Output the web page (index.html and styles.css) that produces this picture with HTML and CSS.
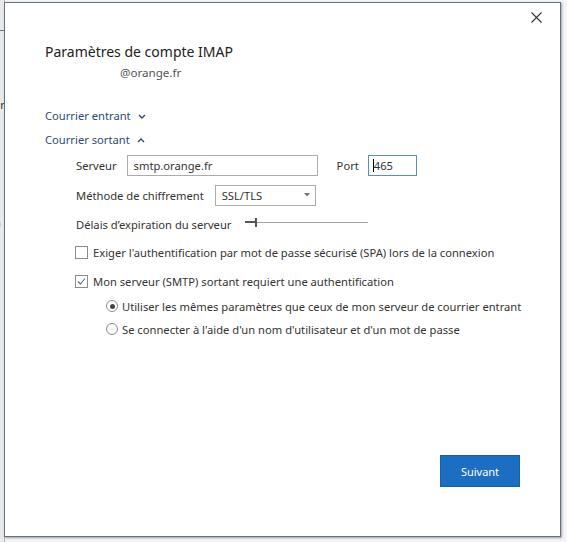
FILE: index.html
```html
<!DOCTYPE html>
<html lang="fr">
<head>
<meta charset="utf-8">
<link rel="stylesheet" href="styles.css">
</head>
<body>
<div class="behind">
  <span class="frag frag1">er</span>
  <span class="frag frag2">c</span>
  <span class="frag frag3">n</span>
  <div class="behind-line"></div>
</div>
<div class="dialog">
  <div class="topbar">
    <svg class="close" width="11" height="11" viewBox="0 0 11 11"><path d="M0.5 0.5 L10.5 10.5 M10.5 0.5 L0.5 10.5" stroke="#333" stroke-width="1.1" fill="none"/></svg>
  </div>
  <h1 class="title">Paramètres de compte IMAP</h1>
  <div class="account">@orange.fr</div>

  <div class="section-head first">Courrier entrant
    <svg class="chev" width="8" height="5" viewBox="0 0 8 5"><path d="M1 1 L4 4 L7 1" stroke="#2b4d6e" stroke-width="1.4" fill="none"/></svg>
  </div>
  <div class="section-head">Courrier sortant
    <svg class="chev" width="8" height="5" viewBox="0 0 8 5"><path d="M1 4 L4 1 L7 4" stroke="#2b4d6e" stroke-width="1.4" fill="none"/></svg>
  </div>

  <div class="fields">
    <div class="row">
      <label class="lbl">Serveur</label>
      <div class="input server">smtp.orange.fr</div>
      <label class="lbl port-lbl">Port</label>
      <div class="input port"><span class="caret"></span>465</div>
    </div>
    <div class="row">
      <label class="lbl method-lbl">Méthode de chiffrement</label>
      <div class="select">SSL/TLS
        <svg class="arrow" width="6" height="4" viewBox="0 0 6 4"><path d="M0 0 L6 0 L3 3.5 Z" fill="#777"/></svg>
      </div>
    </div>
    <div class="row slider-row">
      <label class="lbl">Délais d’expiration du serveur</label>
      <div class="slider"><span class="fill"></span><span class="thumb"></span></div>
    </div>

    <div class="check-row first-check">
      <span class="box"></span>
      <span>Exiger l'authentification par mot de passe sécurisé (SPA) lors de la connexion</span>
    </div>
    <div class="check-row">
      <span class="box">
        <svg width="11" height="11" viewBox="0 0 11 11"><path d="M2 5.5 L4.5 8 L9 2.5" stroke="#5a6670" stroke-width="1.1" fill="none"/></svg>
      </span>
      <span>Mon serveur (SMTP) sortant requiert une authentification</span>
    </div>
    <div class="radios">
      <div class="radio-row">
        <span class="radio on"></span>
        <span>Utiliser les mêmes paramètres que ceux de mon serveur de courrier entrant</span>
      </div>
      <div class="radio-row">
        <span class="radio"></span>
        <span>Se connecter à l'aide d'un nom d'utilisateur et d'un mot de passe</span>
      </div>
    </div>
  </div>

  <div class="footer">
    <button class="primary">Suivant</button>
  </div>
</div>
</body>
</html>
```
FILE: styles.css
```css
html, body {
  margin: 0;
  padding: 0;
}
body {
  width: 567px;
  height: 542px;
  background: #f4f4f4;
  font-family: "Noto Sans", "Open Sans", sans-serif;
  color: #333;
  position: relative;
  overflow: hidden;
}
.behind {
  position: absolute;
  left: 0;
  top: 0;
  width: 4px;
  height: 542px;
  background: #e9e9e9;
  border-right: 1px solid #b5b5b5;
  overflow: hidden;
}
.behind-line {
  position: absolute;
  left: 0;
  top: 30px;
  width: 4px;
  height: 1px;
  background: #777;
}
.frag {
  position: absolute;
  font-size: 11px;
  color: #333;
  left: -6px;
}
.frag1 { top: 97px; }
.frag2 { top: 201px; }
.frag3 { top: 215px; }

.dialog {
  position: absolute;
  left: 4px;
  top: 2px;
  height: 533px;
  width: 515px;
  background: #fff;
  border: 1px solid #607385;
  box-shadow: 1px 1px 2px rgba(0,0,0,0.35);
  padding: 0 0 0 40px;
  display: flex;
  flex-direction: column;
}
.topbar {
  height: 38px;
  display: flex;
  justify-content: flex-end;
  padding: 9px 18px 0 0;
  box-sizing: border-box;
}
.close { display: block; }
.title {
  margin: 0;
  font-weight: normal;
  font-size: 14px;
  line-height: 22px;
  color: #222;
}
.account {
  margin: 2px 0 0 75px;
  font-size: 11.6px;
  line-height: 16px;
  color: #555;
}
.section-head {
  font-size: 11.2px;
  line-height: 18px;
  color: #2b4d6e;
  display: flex;
  align-items: center;
  gap: 7px;
  margin-top: 6px;
}
.section-head.first { margin-top: 26px; }
.chev { display: block; margin-top: 1px; }

.fields {
  padding-left: 31px;
  font-size: 11.2px;
  margin-top: 5px;
}
.row {
  display: flex;
  align-items: center;
  height: 22px;
  margin-bottom: 8px;
}
.lbl { margin-right: 10px; }
.input {
  height: 21px;
  box-sizing: border-box;
  border: 1px solid #ababab;
  padding: 0 6px;
  line-height: 19px;
}
.server { width: 191px; }
.port-lbl { margin-left: 19px; margin-right: 9px; }
.port {
  width: 49px;
  border-color: #5d8eb3;
  padding-left: 4px;
  display: flex;
  align-items: center;
}
.caret {
  width: 1px;
  height: 13px;
  background: #000;
  margin-right: 0;
}
.method-lbl { margin-right: 11px; }
.select {
  width: 101px;
  height: 21px;
  box-sizing: border-box;
  border: 1px solid #ababab;
  padding: 0 5px 0 6px;
  display: flex;
  align-items: center;
  justify-content: space-between;
}
.arrow { display: block; }
.slider-row { margin-top: -1px; margin-bottom: 8px; }
.slider-row .lbl { margin-right: 14px; }
.slider {
  width: 123px;
  height: 1px;
  background: #a4a4a4;
  position: relative;
  margin-top: -4px;
}
.fill {
  position: absolute;
  left: 0;
  top: -1px;
  width: 11px;
  height: 2px;
  background: #555;
}
.thumb {
  position: absolute;
  left: 10px;
  top: -4px;
  width: 2px;
  height: 9px;
  background: #555;
}
.check-row {
  display: flex;
  align-items: center;
  gap: 5px;
  height: 18px;
  margin-top: 11px;
  margin-left: -1px;
}
.check-row.first-check { margin-top: 0; }
.box {
  width: 11px;
  height: 11px;
  border: 1px solid #8b8b8b;
  background: #fff;
  display: flex;
  align-items: center;
  justify-content: center;
  flex: none;
}
.box svg { display: block; }
.radios { padding-left: 30px; margin-top: 7px; }
.radio-row {
  display: flex;
  align-items: center;
  gap: 4px;
  height: 18px;
  margin-bottom: 5px;
}
.radio {
  width: 12px;
  height: 12px;
  border: 1px solid #8b8b8b;
  border-radius: 50%;
  box-sizing: border-box;
  position: relative;
  flex: none;
}
.radio.on::after {
  content: "";
  position: absolute;
  left: 2.5px;
  top: 2.5px;
  width: 5px;
  height: 5px;
  border-radius: 50%;
  background: #444;
}
.footer {
  margin-top: auto;
  margin-bottom: 49px;
  display: flex;
  justify-content: flex-end;
  padding-right: 40px;
}
.primary {
  width: 80px;
  height: 32px;
  background: #1b6ec2;
  border: 1px solid #1660a8;
  color: #fff;
  font-family: inherit;
  font-size: 11px;
  padding: 0;
}
```
